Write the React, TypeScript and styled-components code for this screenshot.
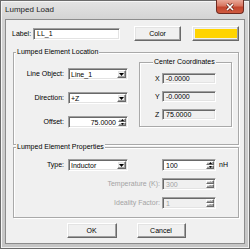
import styled, { createGlobalStyle, css } from "styled-components";

const GlobalStyle = createGlobalStyle`
  html, body {
    margin: 0;
    padding: 0;
    background: #ffffff;
  }
  body {
    font-family: "Liberation Sans", Arial, sans-serif;
    font-size: 7px;
    color: #000000;
  }
  * {
    box-sizing: border-box;
  }
`;

const sunken = css`
  border: 1px solid;
  border-color: #a0a0a0 #ffffff #ffffff #a0a0a0;
  box-shadow: inset 1px 1px 0 #696969, inset -1px -1px 0 #e3e3e3;
`;

const raised = css`
  border: 1px solid;
  border-color: #ffffff #696969 #696969 #ffffff;
  box-shadow: inset -1px -1px 0 #a0a0a0, inset 1px 1px 0 #e3e3e3;
  background: #f0f0f0;
`;

const Window = styled.div`
  width: 250px;
  height: 249px;
  display: flex;
  flex-direction: column;
  border: 1px solid #6b6b6b;
  padding: 0 4px 4px;
  background: linear-gradient(#e4e4e4, #d2d2d2 20px, #c6c6c6);
  box-shadow: inset 1px 1px 0 #f6f6f6, inset -1px -1px 0 #f0f0f0;
`;

const TitleBar = styled.div`
  display: flex;
  align-items: flex-start;
  height: 18px;
`;

const Title = styled.div`
  font-size: 8px;
  line-height: 18px;
  color: #1e1e1e;
`;

const CloseButton = styled.div`
  display: flex;
  align-items: center;
  justify-content: center;
  width: 28px;
  height: 14px;
  margin: -1px 1px 0 auto;
  border: 1px solid #6e2a20;
  border-top: none;
  border-radius: 0 0 4px 4px;
  background: linear-gradient(#e9a898, #d87661 45%, #c2452e 55%, #cf5a3f);
`;

const Client = styled.div`
  flex: 1;
  display: flex;
  flex-direction: column;
  padding: 6px 5px 0 7px;
  border: 1px solid #8c8c8c;
  background: #f0f0f0;
`;

const TopRow = styled.div`
  display: flex;
  align-items: center;
  height: 15px;
  margin-left: -1px;
`;

const Text = styled.span<{ $dim?: boolean }>`
  line-height: 10px;
  white-space: nowrap;
  color: ${(p) => (p.$dim ? "#a3a3a3" : "#000000")};
`;

const TextInput = styled.div`
  ${sunken};
  width: 87px;
  height: 12px;
  margin-left: 2px;
  padding-left: 3px;
  line-height: 10px;
  background: #ffffff;
`;

const PushButton = styled.div<{ $width: number; $gap: number }>`
  ${raised};
  display: flex;
  align-items: center;
  justify-content: center;
  width: ${(p) => p.$width}px;
  height: 15px;
  margin-left: ${(p) => p.$gap}px;
`;

const Swatch = styled.div`
  ${raised};
  width: 47px;
  height: 15px;
  margin-left: 11px;
  padding: 2px 1px 2px 2px;
  &::after {
    content: "";
    display: block;
    height: 100%;
    background: #ffd400;
  }
`;

const Group = styled.fieldset<{ $top: number; $bottom: number; $pad: number }>`
  margin: ${(p) => p.$top}px 0 0;
  padding: 0 0 ${(p) => p.$bottom}px;
  min-width: 0;
  border: 1px solid #a9a9a9;
  box-shadow: inset 1px 1px 0 #ffffff, 1px 1px 0 #ffffff;
  padding-top: ${(p) => p.$pad}px;
`;

const Legend = styled.legend<{ $offset: number }>`
  margin-left: ${(p) => p.$offset}px;
  padding: 0 1px;
  height: 8px;
  line-height: 8px;
  background: #f0f0f0;
`;

const LocationBody = styled.div`
  display: flex;
  align-items: flex-start;
`;

const LeftColumn = styled.div`
  display: flex;
  flex-direction: column;
  gap: 12px;
  padding-top: 12px;
`;

const FieldRow = styled.div`
  display: flex;
  align-items: center;
  height: 12px;
`;

const FieldLabel = styled(Text)<{ $width: number; $gap: number }>`
  width: ${(p) => p.$width}px;
  margin-right: ${(p) => p.$gap}px;
  text-align: right;
`;

const ComboBox = styled.div`
  ${sunken};
  display: flex;
  align-items: stretch;
  width: 60px;
  height: 12px;
  padding: 1px;
  background: #ffffff;
`;

const ComboValue = styled.div`
  flex: 1;
  padding-left: 1px;
  line-height: 9px;
`;

const DropButton = styled.div`
  ${raised};
  display: flex;
  align-items: center;
  justify-content: center;
  width: 9px;
`;

const SpinBox = styled.div<{ $width: number; $gap?: number; $disabled?: boolean }>`
  ${sunken};
  display: flex;
  align-items: stretch;
  width: ${(p) => p.$width}px;
  height: 12px;
  margin-left: ${(p) => p.$gap ?? 0}px;
  padding: 1px;
  background: ${(p) => (p.$disabled ? "#f0f0f0" : "#ffffff")};
  color: ${(p) => (p.$disabled ? "#a3a3a3" : "#000000")};
`;

const SpinValue = styled.div<{ $right?: boolean }>`
  flex: 1;
  padding: 0 2px 0 2px;
  line-height: 9px;
  text-align: ${(p) => (p.$right ? "right" : "left")};
`;

const SpinArrows = styled.div`
  display: flex;
  flex-direction: column;
  width: 8px;
`;

const SpinHalf = styled.div`
  ${raised};
  flex: 1;
  display: flex;
  align-items: center;
  justify-content: center;
`;

const CenterGroup = styled.fieldset`
  margin: 2px 0 0 11px;
  padding: 7px 0 6px 15px;
  width: 93px;
  min-width: 0;
  border: 1px solid #a9a9a9;
  box-shadow: inset 1px 1px 0 #ffffff, 1px 1px 0 #ffffff;
  display: flex;
  flex-direction: column;
  gap: 7px;
`;

const CoordRow = styled.div`
  display: flex;
  align-items: center;
  height: 11px;
`;

const CoordLabel = styled(Text)`
  width: 5px;
  margin-right: 2px;
`;

const CoordField = styled.div`
  ${sunken};
  width: 54px;
  height: 11px;
  padding-left: 3px;
  line-height: 9px;
  background: #f0f0f0;
`;

const PropsBody = styled.div`
  display: flex;
  flex-direction: column;
  gap: 7px;
`;

const Unit = styled(Text)`
  margin-left: 3px;
`;

const ButtonRow = styled.div`
  display: flex;
  justify-content: center;
  gap: 20px;
  margin-top: 5px;
`;

const Arrow = ({ up, color = "#000" }: { up?: boolean; color?: string }) => (
  <svg width="5" height="3" viewBox="0 0 5 3">
    <path d={up ? "M0 3h5L2.5 0z" : "M0 0h5L2.5 3z"} fill={color} />
  </svg>
);

const Combo = ({ value }: { value: string }) => (
  <ComboBox>
    <ComboValue>{value}</ComboValue>
    <DropButton>
      <Arrow />
    </DropButton>
  </ComboBox>
);

const Spin = ({
  value,
  width,
  gap,
  right,
  disabled,
}: {
  value: string;
  width: number;
  gap?: number;
  right?: boolean;
  disabled?: boolean;
}) => (
  <SpinBox $width={width} $gap={gap} $disabled={disabled}>
    <SpinValue $right={right}>{value}</SpinValue>
    <SpinArrows>
      <SpinHalf>
        <svg width="3" height="2" viewBox="0 0 3 2">
          <path d="M0 2h3L1.5 0z" fill={disabled ? "#a0a0a0" : "#000"} />
        </svg>
      </SpinHalf>
      <SpinHalf>
        <svg width="3" height="2" viewBox="0 0 3 2">
          <path d="M0 0h3L1.5 2z" fill={disabled ? "#a0a0a0" : "#000"} />
        </svg>
      </SpinHalf>
    </SpinArrows>
  </SpinBox>
);

export default function App() {
  return (
    <>
      <GlobalStyle />
      <Window>
        <TitleBar>
          <Title>Lumped Load</Title>
          <CloseButton>
            <svg width="10" height="8" viewBox="0 0 10 8">
              <path d="M2 1l6 6M8 1L2 7" stroke="#6a2518" strokeWidth="3" />
              <path d="M2 1l6 6M8 1L2 7" stroke="#ffffff" strokeWidth="1.6" />
            </svg>
          </CloseButton>
        </TitleBar>
        <Client>
          <TopRow>
            <Text>Label:</Text>
            <TextInput>LL_1</TextInput>
            <PushButton $width={47} $gap={14}>
              Color
            </PushButton>
            <Swatch />
          </TopRow>

          <Group $top={7} $bottom={16} $pad={0}>
            <Legend $offset={2}>Lumped Element Location</Legend>
            <LocationBody>
              <LeftColumn>
                <FieldRow>
                  <FieldLabel $width={50} $gap={4}>
                    Line Object:
                  </FieldLabel>
                  <Combo value="Line_1" />
                </FieldRow>
                <FieldRow>
                  <FieldLabel $width={50} $gap={4}>
                    Direction:
                  </FieldLabel>
                  <Combo value="+Z" />
                </FieldRow>
                <FieldRow>
                  <FieldLabel $width={50} $gap={4}>
                    Offset:
                  </FieldLabel>
                  <Spin value="75.0000" width={60} right />
                </FieldRow>
              </LeftColumn>
              <CenterGroup>
                <Legend $offset={-2}>Center Coordinates</Legend>
                <CoordRow>
                  <CoordLabel>X</CoordLabel>
                  <CoordField>-0.0000</CoordField>
                </CoordRow>
                <CoordRow>
                  <CoordLabel>Y</CoordLabel>
                  <CoordField>-0.0000</CoordField>
                </CoordRow>
                <CoordRow>
                  <CoordLabel>Z</CoordLabel>
                  <CoordField>75.0000</CoordField>
                </CoordRow>
              </CenterGroup>
            </LocationBody>
          </Group>

          <Group $top={-2} $bottom={8} $pad={8}>
            <Legend $offset={2}>Lumped Element Properties</Legend>
            <PropsBody>
              <FieldRow>
                <FieldLabel $width={50} $gap={4}>
                  Type:
                </FieldLabel>
                <Combo value="Inductor" />
                <Spin value="100" width={54} gap={34} />
                <Unit>nH</Unit>
              </FieldRow>
              <FieldRow>
                <FieldLabel $width={146} $gap={2} $dim>
                  Temperature (K):
                </FieldLabel>
                <Spin value="300" width={54} disabled />
              </FieldRow>
              <FieldRow>
                <FieldLabel $width={146} $gap={2} $dim>
                  Ideality Factor:
                </FieldLabel>
                <Spin value="1" width={54} disabled />
              </FieldRow>
            </PropsBody>
          </Group>

          <ButtonRow>
            <PushButton $width={50} $gap={0}>
              OK
            </PushButton>
            <PushButton $width={49} $gap={0}>
              Cancel
            </PushButton>
          </ButtonRow>
        </Client>
      </Window>
    </>
  );
}
